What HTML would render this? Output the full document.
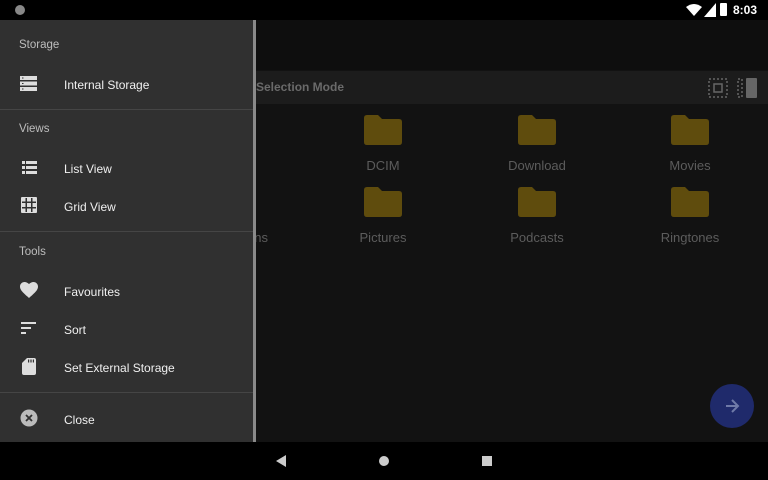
<!DOCTYPE html>
<html><head><style>
*{margin:0;padding:0;box-sizing:border-box}
body{width:768px;height:480px;background:#121212;font-family:"Liberation Sans",sans-serif;position:relative;overflow:hidden}
.abs{position:absolute}
.sb{left:0;top:0;width:768px;height:20px;background:#000}
.nav{left:0;top:442px;width:768px;height:38px;background:#000}
.top{left:256px;top:20px;width:512px;height:50px;background:#0e0e0e}
.sel{left:256px;top:71px;width:512px;height:33px;background:#1c1c1c;color:#6a6a6a;font-size:12px;font-weight:bold;line-height:33px}
.drawer{left:0;top:20px;width:253px;height:422px;background:#303030}
.scroll{left:253px;top:20px;width:3px;height:422px;background:#8a8a8a}
.hd{left:19px;color:#bdbdbd;font-size:11.5px}
.it{left:64px;color:#f0f0f0;font-size:12px}
.div{left:0;width:253px;height:1px;background:#454545}
.fold{width:38px;height:30px}
.lbl{color:#5c5c5c;font-size:13px;width:120px;text-align:center}
</style></head><body>
<div class="abs sb"></div>
<div class="abs" style="left:15px;top:5px;width:10px;height:10px;border-radius:50%;background:#888"></div>
<svg class="abs" style="left:686px;top:4px" width="16" height="12"><path d="M0 3Q8-3 16 3L8 12Z" fill="#fff"/></svg>
<svg class="abs" style="left:704px;top:3px" width="12" height="14"><path d="M12 0V14H0Z" fill="#fff"/></svg>
<div class="abs" style="left:720px;top:3px;width:7px;height:13px;background:#fff;border-radius:1px"></div>
<div class="abs" style="left:733px;top:3px;color:#fff;font-size:12px;font-weight:bold">8:03</div>
<div class="abs top"></div>
<div class="abs sel">Selection Mode</div>
<svg class="abs" style="left:708px;top:78px" width="20" height="20"><rect x="1" y="1" width="18" height="18" fill="none" stroke="#666" stroke-width="1.5" stroke-dasharray="2 2"/><rect x="6" y="6" width="8" height="8" fill="none" stroke="#666" stroke-width="1.5"/></svg>
<svg class="abs" style="left:737px;top:77px" width="22" height="22"><rect x="1" y="2" width="4" height="18" fill="none" stroke="#666" stroke-width="1.5" stroke-dasharray="2 2"/><rect x="9" y="1" width="11" height="20" rx="1" fill="#666"/></svg>
<svg width="0" height="0"><defs><path id="f" d="M3 0H14L18 4H35Q38 4 38 7V27Q38 30 35 30H3Q0 30 0 27V3Q0 0 3 0Z" fill="#5f4c0d"/></defs></svg>
<svg class="abs fold" style="left:364px;top:115px"><use href="#f"/></svg>
<svg class="abs fold" style="left:518px;top:115px"><use href="#f"/></svg>
<svg class="abs fold" style="left:671px;top:115px"><use href="#f"/></svg>
<svg class="abs fold" style="left:364px;top:187px"><use href="#f"/></svg>
<svg class="abs fold" style="left:518px;top:187px"><use href="#f"/></svg>
<svg class="abs fold" style="left:671px;top:187px"><use href="#f"/></svg>
<div class="abs lbl" style="left:323px;top:158px">DCIM</div>
<div class="abs lbl" style="left:477px;top:158px">Download</div>
<div class="abs lbl" style="left:630px;top:158px">Movies</div>
<div class="abs lbl" style="left:323px;top:230px">Pictures</div>
<div class="abs lbl" style="left:477px;top:230px">Podcasts</div>
<div class="abs lbl" style="left:630px;top:230px">Ringtones</div>
<div class="abs lbl" style="left:200px;top:230px;text-align:right;width:68px">ns</div>
<div class="abs" style="left:710px;top:384px;width:44px;height:44px;border-radius:50%;background:#1f2a6b"></div>
<svg class="abs" style="left:724px;top:398px" width="16" height="16"><path d="M2 8H14M8 2L14 8L8 14" stroke="#6f7aa8" stroke-width="2" fill="none"/></svg>
<div class="abs drawer"></div>
<div class="abs scroll"></div>
<div class="abs hd" style="top:39px">Storage</div>
<svg class="abs" style="left:20px;top:76px" width="18" height="15"><g fill="#ddd"><rect y="0" width="17" height="4"/><rect y="5.5" width="17" height="4"/><rect y="11" width="17" height="4"/></g><g fill="#303030"><rect x="2" y="1.5" width="1.5" height="1"/><rect x="2" y="7" width="1.5" height="1"/><rect x="2" y="12.5" width="1.5" height="1"/></g></svg>
<div class="abs it" style="top:78px">Internal Storage</div>
<div class="abs div" style="top:109px"></div>
<div class="abs hd" style="top:123px">Views</div>
<svg class="abs" style="left:22px;top:161px" width="15" height="13"><g fill="#ddd"><rect width="3" height="3"/><rect x="4" width="11" height="3"/><rect y="5" width="3" height="3"/><rect x="4" y="5" width="11" height="3"/><rect y="10" width="3" height="3"/><rect x="4" y="10" width="11" height="3"/></g></svg>
<div class="abs it" style="top:162px">List View</div>
<svg class="abs" style="left:21px;top:197px" width="16" height="16"><g fill="#ddd"><rect width="16" height="16" rx="1"/></g><g fill="#303030"><rect x="4.5" y="1" width="1.5" height="14"/><rect x="10" y="1" width="1.5" height="14"/><rect x="1" y="4.5" width="14" height="1.5"/><rect x="1" y="10" width="14" height="1.5"/></g></svg>
<div class="abs it" style="top:200px">Grid View</div>
<div class="abs div" style="top:231px"></div>
<div class="abs hd" style="top:246px">Tools</div>
<svg class="abs" style="left:20px;top:282px" width="18" height="16"><path d="M9 16L7.7 14.8C3 10.6 0 7.9 0 4.6 0 2 2 0 4.5 0 6 0 7.4.7 9 2 10.6.7 12 0 13.5 0 16 0 18 2 18 4.6 18 7.9 15 10.6 10.3 14.8Z" fill="#ddd"/></svg>
<div class="abs it" style="top:285px">Favourites</div>
<svg class="abs" style="left:21px;top:322px" width="16" height="12"><g fill="#ddd"><rect width="15" height="2"/><rect y="5" width="10" height="2"/><rect y="10" width="5" height="2"/></g></svg>
<div class="abs it" style="top:323px">Sort</div>
<svg class="abs" style="left:22px;top:358px" width="14" height="17"><path d="M5 0H12Q14 0 14 2V15Q14 17 12 17H2Q0 17 0 15V5Z" fill="#ddd"/><g fill="#303030"><rect x="6" y="1.5" width="1.2" height="3"/><rect x="8.4" y="1.5" width="1.2" height="3"/><rect x="10.8" y="1.5" width="1.2" height="3"/></g></svg>
<div class="abs it" style="top:361px">Set External Storage</div>
<div class="abs div" style="top:392px"></div>
<svg class="abs" style="left:20px;top:409px" width="18" height="18"><circle cx="9" cy="9" r="8.5" fill="#bbb"/><path d="M6 6L12 12M12 6L6 12" stroke="#303030" stroke-width="1.8"/></svg>
<div class="abs it" style="top:413px">Close</div>
<div class="abs nav"></div>
<svg class="abs" style="left:276px;top:455px" width="12" height="12"><path d="M10 0V12L0 6Z" fill="#ccc"/></svg>
<div class="abs" style="left:379px;top:456px;width:10px;height:10px;border-radius:50%;background:#ccc"></div>
<div class="abs" style="left:482px;top:456px;width:10px;height:10px;background:#ccc"></div>
</body></html>
